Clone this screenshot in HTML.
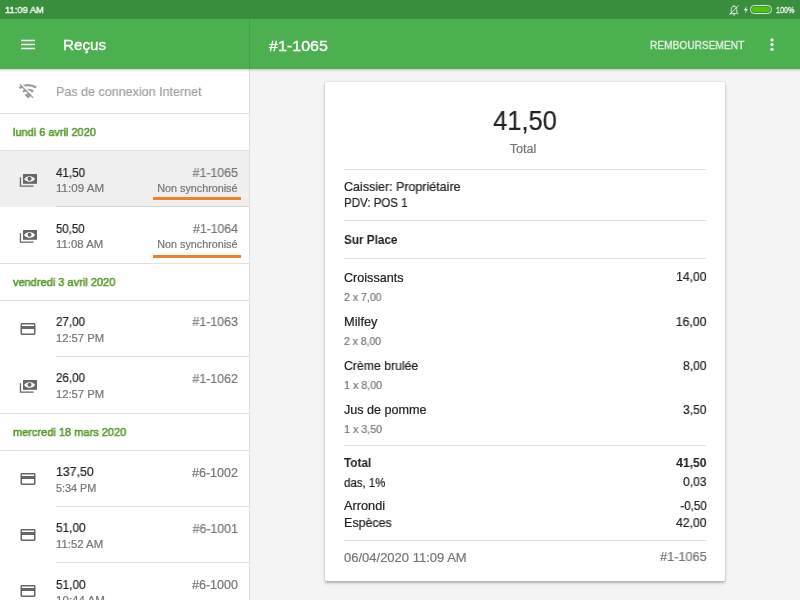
<!DOCTYPE html>
<html><head><meta charset="utf-8">
<style>
*{margin:0;padding:0;box-sizing:border-box}
html,body{width:800px;height:600px;overflow:hidden;background:#f4f4f4;font-family:"Liberation Sans",sans-serif;position:relative}
.t{position:absolute;white-space:nowrap;line-height:20px;will-change:transform}
.ln{position:absolute;height:1px}
.ic{position:absolute}
</style></head><body>
<div style="position:absolute;left:0;top:0;width:800px;height:19px;background:#3a8f3e"></div>
<div style="position:absolute;left:0;top:19px;width:800px;height:50px;background:#4caf50"></div>
<div style="position:absolute;left:249px;top:19px;width:1px;height:50px;background:#43a047"></div>
<div style="position:absolute;left:0;top:69px;width:249px;height:531px;background:#fff"></div>
<div style="position:absolute;left:249px;top:69px;width:1px;height:531px;background:#dedede"></div>
<div style="position:absolute;left:0;top:151px;width:249px;height:56px;background:#efefef"></div>
<div style="position:absolute;left:153px;top:197px;width:88px;height:3px;background:#f07f2c"></div>
<div style="position:absolute;left:153px;top:255px;width:88px;height:3px;background:#f07f2c"></div>
<div style="position:absolute;left:325px;top:82px;width:400px;height:498.5px;background:#fff;border-radius:1.5px;box-shadow:0 1.5px 3px rgba(0,0,0,.28),0 0 1.5px rgba(0,0,0,.14)"></div>
<div class="ln" style="left:0px;top:113px;width:249px;background:rgba(0,0,0,0.12)"></div><div class="ln" style="left:0px;top:150px;width:249px;background:rgba(0,0,0,0.12)"></div><div class="ln" style="left:0px;top:263px;width:249px;background:rgba(0,0,0,0.12)"></div><div class="ln" style="left:0px;top:300px;width:249px;background:rgba(0,0,0,0.12)"></div><div class="ln" style="left:0px;top:413px;width:249px;background:rgba(0,0,0,0.12)"></div><div class="ln" style="left:0px;top:450px;width:249px;background:rgba(0,0,0,0.12)"></div><div class="ln" style="left:56px;top:206px;width:193px;background:rgba(0,0,0,0.12)"></div><div class="ln" style="left:56px;top:356px;width:193px;background:rgba(0,0,0,0.12)"></div><div class="ln" style="left:56px;top:506px;width:193px;background:rgba(0,0,0,0.12)"></div><div class="ln" style="left:56px;top:562px;width:193px;background:rgba(0,0,0,0.12)"></div><div class="ln" style="left:344px;top:169px;width:362px;background:rgba(0,0,0,0.12)"></div><div class="ln" style="left:344px;top:220px;width:362px;background:rgba(0,0,0,0.12)"></div><div class="ln" style="left:344px;top:258px;width:362px;background:rgba(0,0,0,0.12)"></div><div class="ln" style="left:344px;top:445px;width:362px;background:rgba(0,0,0,0.12)"></div><div class="ln" style="left:344px;top:540px;width:362px;background:rgba(0,0,0,0.12)"></div>
<svg class="ic" style="left:21px;top:39px" width="14" height="11" viewBox="0 0 14 11"><path stroke="#fff" stroke-width="1.5" d="M0.1 1.6h13.9M0.1 5.55h13.9M0.1 9.5h13.9"/></svg>
<svg class="ic" style="left:769px;top:38px" width="6" height="14" viewBox="0 0 6 14"><circle cx="3" cy="1.9" r="1.6" fill="#fff"/><circle cx="3" cy="6.6" r="1.6" fill="#fff"/><circle cx="3" cy="11.3" r="1.6" fill="#fff"/></svg>
<svg class="ic" style="left:15px;top:78px" width="26" height="26" viewBox="0 0 26 26"><defs><mask id="wm"><rect width="26" height="26" fill="#fff"/><path d="M5.9 5.3L19.3 18.7" stroke="#000" stroke-width="1.5"/></mask></defs><g mask="url(#wm)" fill="none" stroke="#9a9a9a" stroke-width="2.2"><path d="M4.42 10.12A14.5 14.5 0 0 1 21.05 9.54"/><path d="M7.87 13.56A9.7 9.7 0 0 1 18.29 13.47"/><path d="M13.15 20.6L9.67 16.74A5.2 5.2 0 0 1 16.63 16.74Z" fill="#9a9a9a" stroke="none"/><path d="M4.9 6.5L18.1 19.7" stroke-width="1.4"/></g></svg>
<svg class="ic" style="left:728px;top:4px" width="12" height="12" viewBox="0 0 12 12"><path d="M3.2 9.6V5.4C3.2 3.6 4.4 2.2 6 2.2S8.8 3.6 8.8 5.4V9.6H10.2M1.8 9.6H8.2M4.9 10.6Q6 11.9 7.1 10.6M6 1V2.2M1.6 10.8L10.4 1.4" fill="none" stroke="#e8f0e8" stroke-width="0.9"/></svg>
<svg class="ic" style="left:743px;top:6px" width="6" height="8" viewBox="0 0 6 8"><path d="M3.9 0L0.8 4.3H2.8L1.8 7.4L5 3.1H3Z" fill="#e8f0e8"/></svg>
<div style="position:absolute;left:750px;top:5.3px;width:22.4px;height:8.6px;border:1.1px solid #d8e8d8;border-radius:4.3px;background:#3a8f3e"></div>
<div style="position:absolute;left:752.2px;top:7px;width:18px;height:5.2px;border-radius:2.6px;background:#4ec40a"></div>
<svg class="ic" style="left:19px;top:173px" width="18" height="18" viewBox="0 0 18 18">
<path fill="#666" d="M0.8 4.3h1.3v8.1h12.5v1.3H0.8z"/>
<rect x="4" y="1" width="14" height="9.8" fill="#666"/>
<path fill="#efefef" d="M5 5.9C7 3.6 9 3.2 10.5 3.2S14.5 3.6 16.1 5.9C14.5 8.2 12 8.8 10.5 8.8S7 8.2 5 5.9z"/>
<circle cx="10.5" cy="5.8" r="2" fill="#666"/>
</svg><svg class="ic" style="left:19px;top:229px" width="18" height="18" viewBox="0 0 18 18">
<path fill="#666" d="M0.8 4.3h1.3v8.1h12.5v1.3H0.8z"/>
<rect x="4" y="1" width="14" height="9.8" fill="#666"/>
<path fill="#fff" d="M5 5.9C7 3.6 9 3.2 10.5 3.2S14.5 3.6 16.1 5.9C14.5 8.2 12 8.8 10.5 8.8S7 8.2 5 5.9z"/>
<circle cx="10.5" cy="5.8" r="2" fill="#666"/>
</svg><svg class="ic" style="left:19px;top:320px" width="18" height="18" viewBox="0 0 24 24"><path fill="#666" d="M20 4H4c-1.11 0-1.99.89-1.99 2L2 18c0 1.11.89 2 2 2h16c1.11 0 2-.89 2-2V6c0-1.11-.89-2-2-2zm0 14H4v-6h16v6zm0-10H4V6h16v2z"/></svg><svg class="ic" style="left:19px;top:379px" width="18" height="18" viewBox="0 0 18 18">
<path fill="#666" d="M0.8 4.3h1.3v8.1h12.5v1.3H0.8z"/>
<rect x="4" y="1" width="14" height="9.8" fill="#666"/>
<path fill="#fff" d="M5 5.9C7 3.6 9 3.2 10.5 3.2S14.5 3.6 16.1 5.9C14.5 8.2 12 8.8 10.5 8.8S7 8.2 5 5.9z"/>
<circle cx="10.5" cy="5.8" r="2" fill="#666"/>
</svg><svg class="ic" style="left:19px;top:470px" width="18" height="18" viewBox="0 0 24 24"><path fill="#666" d="M20 4H4c-1.11 0-1.99.89-1.99 2L2 18c0 1.11.89 2 2 2h16c1.11 0 2-.89 2-2V6c0-1.11-.89-2-2-2zm0 14H4v-6h16v6zm0-10H4V6h16v2z"/></svg><svg class="ic" style="left:19px;top:526px" width="18" height="18" viewBox="0 0 24 24"><path fill="#666" d="M20 4H4c-1.11 0-1.99.89-1.99 2L2 18c0 1.11.89 2 2 2h16c1.11 0 2-.89 2-2V6c0-1.11-.89-2-2-2zm0 14H4v-6h16v6zm0-10H4V6h16v2z"/></svg><svg class="ic" style="left:19px;top:582px" width="18" height="18" viewBox="0 0 24 24"><path fill="#666" d="M20 4H4c-1.11 0-1.99.89-1.99 2L2 18c0 1.11.89 2 2 2h16c1.11 0 2-.89 2-2V6c0-1.11-.89-2-2-2zm0 14H4v-6h16v6zm0-10H4V6h16v2z"/></svg>
<div style="position:absolute;left:0;top:69px;width:800px;height:3px;background:linear-gradient(rgba(60,40,60,.2),rgba(60,40,60,0))"></div>
<div class="t" style="top:-0.13px;font-size:9.6px;-webkit-text-stroke:0.35px #ffffff;color:#ffffff;left:5px;transform:scaleX(0.9783);transform-origin:left;">11:09 AM</div><div class="t" style="top:-0.21px;font-size:8.4px;-webkit-text-stroke:0.35px #f4f4f4;color:#f4f4f4;left:775.5px;transform:scaleX(0.8595);transform-origin:left;">100%</div><div class="t" style="top:35.40px;font-size:15px;-webkit-text-stroke:0.35px #ffffff;color:#ffffff;left:63px;transform:scaleX(1.0152);transform-origin:left;">Reçus</div><div class="t" style="top:35.96px;font-size:15.4px;-webkit-text-stroke:0.35px #ffffff;color:#ffffff;left:269px;transform:scaleX(1.0443);transform-origin:left;">#1-1065</div><div class="t" style="top:35.12px;font-size:11.5px;-webkit-text-stroke:0.35px #e6f3e6;color:#e6f3e6;left:649.5px;transform:scaleX(0.8840);transform-origin:left;">REMBOURSEMENT</div><div class="t" style="top:81.82px;font-size:13.5px;-webkit-text-stroke:0.2px #9e9e9e;color:#9e9e9e;left:56px;transform:scaleX(0.9285);transform-origin:left;">Pas de connexion Internet</div><div class="t" style="top:122.45px;font-size:11.4px;-webkit-text-stroke:0.55px #58992c;color:#58992c;left:12.6px;transform:scaleX(0.9623);transform-origin:left;">lundi 6 avril 2020</div><div class="t" style="top:272.45px;font-size:11.4px;-webkit-text-stroke:0.55px #58992c;color:#58992c;left:12.6px;transform:scaleX(0.9670);transform-origin:left;">vendredi 3 avril 2020</div><div class="t" style="top:422.45px;font-size:11.4px;-webkit-text-stroke:0.55px #58992c;color:#58992c;left:12.6px;transform:scaleX(0.9670);transform-origin:left;">mercredi 18 mars 2020</div><div class="t" style="top:162.70px;font-size:12.7px;-webkit-text-stroke:0.2px #212121;color:#212121;left:56.4px;transform:scaleX(0.9127);transform-origin:left;">41,50</div><div class="t" style="top:177.83px;font-size:10.6px;-webkit-text-stroke:0.2px #757575;color:#757575;left:56.4px;transform:scaleX(1.0936);transform-origin:left;">11:09 AM</div><div class="t" style="top:163.07px;font-size:12.5px;-webkit-text-stroke:0.2px #757575;color:#757575;right:562px;transform:scaleX(0.9874);transform-origin:right;">#1-1065</div><div class="t" style="top:179.03px;font-size:10px;-webkit-text-stroke:0.2px #757575;color:#757575;right:562.4px;transform:scaleX(1.0774);transform-origin:right;">Non synchronisé</div><div class="t" style="top:218.60px;font-size:12.7px;-webkit-text-stroke:0.2px #212121;color:#212121;left:56.4px;transform:scaleX(0.8971);transform-origin:left;">50,50</div><div class="t" style="top:234.33px;font-size:10.6px;-webkit-text-stroke:0.2px #757575;color:#757575;left:56.4px;transform:scaleX(1.0755);transform-origin:left;">11:08 AM</div><div class="t" style="top:218.97px;font-size:12.5px;-webkit-text-stroke:0.2px #757575;color:#757575;right:562px;transform:scaleX(0.9770);transform-origin:right;">#1-1064</div><div class="t" style="top:234.94px;font-size:10px;-webkit-text-stroke:0.2px #757575;color:#757575;right:562.4px;transform:scaleX(1.0772);transform-origin:right;">Non synchronisé</div><div class="t" style="top:312.10px;font-size:12.7px;-webkit-text-stroke:0.2px #212121;color:#212121;left:56.4px;transform:scaleX(0.9120);transform-origin:left;">27,00</div><div class="t" style="top:327.83px;font-size:10.6px;-webkit-text-stroke:0.2px #757575;color:#757575;left:56.4px;transform:scaleX(1.0591);transform-origin:left;">12:57 PM</div><div class="t" style="top:312.47px;font-size:12.5px;-webkit-text-stroke:0.2px #757575;color:#757575;right:562px;transform:scaleX(0.9919);transform-origin:right;">#1-1063</div><div class="t" style="top:368.30px;font-size:12.7px;-webkit-text-stroke:0.2px #212121;color:#212121;left:56.4px;transform:scaleX(0.9120);transform-origin:left;">26,00</div><div class="t" style="top:384.03px;font-size:10.6px;-webkit-text-stroke:0.2px #757575;color:#757575;left:56.4px;transform:scaleX(1.0591);transform-origin:left;">12:57 PM</div><div class="t" style="top:368.67px;font-size:12.5px;-webkit-text-stroke:0.2px #757575;color:#757575;right:562px;transform:scaleX(0.9919);transform-origin:right;">#1-1062</div><div class="t" style="top:462.40px;font-size:12.7px;-webkit-text-stroke:0.2px #212121;color:#212121;left:56.4px;transform:scaleX(0.9717);transform-origin:left;">137,50</div><div class="t" style="top:478.13px;font-size:10.6px;-webkit-text-stroke:0.2px #757575;color:#757575;left:56.4px;transform:scaleX(1.0229);transform-origin:left;">5:34 PM</div><div class="t" style="top:462.77px;font-size:12.5px;-webkit-text-stroke:0.2px #757575;color:#757575;right:562px;transform:scaleX(1.0008);transform-origin:right;">#6-1002</div><div class="t" style="top:518.40px;font-size:12.7px;-webkit-text-stroke:0.2px #212121;color:#212121;left:56.4px;transform:scaleX(0.9306);transform-origin:left;">51,00</div><div class="t" style="top:534.13px;font-size:10.6px;-webkit-text-stroke:0.2px #757575;color:#757575;left:56.4px;transform:scaleX(1.0719);transform-origin:left;">11:52 AM</div><div class="t" style="top:518.77px;font-size:12.5px;-webkit-text-stroke:0.2px #757575;color:#757575;right:562px;transform:scaleX(0.9876);transform-origin:right;">#6-1001</div><div class="t" style="top:574.60px;font-size:12.7px;-webkit-text-stroke:0.2px #212121;color:#212121;left:56.4px;transform:scaleX(0.9306);transform-origin:left;">51,00</div><div class="t" style="top:590.33px;font-size:10.6px;-webkit-text-stroke:0.2px #757575;color:#757575;left:56.4px;transform:scaleX(1.0936);transform-origin:left;">10:44 AM</div><div class="t" style="top:574.97px;font-size:12.5px;-webkit-text-stroke:0.2px #757575;color:#757575;right:562px;transform:scaleX(1.0004);transform-origin:right;">#6-1000</div><div class="t" style="top:111.24px;font-size:27px;-webkit-text-stroke:0.2px #212121;color:#212121;left:224.70000000000005px;width:600px;text-align:center;transform:scaleX(0.9422);transform-origin:center;">41,50</div><div class="t" style="top:138.64px;font-size:12px;-webkit-text-stroke:0.2px #757575;color:#757575;left:223px;width:600px;text-align:center;transform:scaleX(1.0515);transform-origin:center;">Total</div><div class="t" style="top:176.63px;font-size:12.6px;-webkit-text-stroke:0.2px #212121;color:#212121;left:344px;transform:scaleX(0.9915);transform-origin:left;">Caissier: Propriétaire</div><div class="t" style="top:192.88px;font-size:12.6px;-webkit-text-stroke:0.2px #212121;color:#212121;left:344px;transform:scaleX(0.9154);transform-origin:left;">PDV: POS 1</div><div class="t" style="top:230.23px;font-size:12.6px;font-weight:700;color:#212121;left:344px;transform:scaleX(0.9289);transform-origin:left;">Sur Place</div><div class="t" style="top:267.63px;font-size:12.6px;-webkit-text-stroke:0.2px #212121;color:#212121;left:344px;">Croissants</div><div class="t" style="top:267.43px;font-size:12.6px;-webkit-text-stroke:0.2px #212121;color:#212121;right:93.29999999999995px;transform:scaleX(0.9664);transform-origin:right;">14,00</div><div class="t" style="top:286.59px;font-size:11px;-webkit-text-stroke:0.2px #757575;color:#757575;left:344px;transform:scaleX(0.9599);transform-origin:left;">2 x 7,00</div><div class="t" style="top:311.83px;font-size:12.6px;-webkit-text-stroke:0.2px #212121;color:#212121;left:344px;transform:scaleX(1.0195);transform-origin:left;">Milfey</div><div class="t" style="top:311.63px;font-size:12.6px;-webkit-text-stroke:0.2px #212121;color:#212121;right:93.29999999999995px;transform:scaleX(0.9776);transform-origin:right;">16,00</div><div class="t" style="top:330.79px;font-size:11px;-webkit-text-stroke:0.2px #757575;color:#757575;left:344px;transform:scaleX(0.9435);transform-origin:left;">2 x 8,00</div><div class="t" style="top:356.03px;font-size:12.6px;-webkit-text-stroke:0.2px #212121;color:#212121;left:344px;transform:scaleX(0.9737);transform-origin:left;">Crème brulée</div><div class="t" style="top:355.83px;font-size:12.6px;-webkit-text-stroke:0.2px #212121;color:#212121;right:93.29999999999995px;transform:scaleX(0.9583);transform-origin:right;">8,00</div><div class="t" style="top:374.99px;font-size:11px;-webkit-text-stroke:0.2px #757575;color:#757575;left:344px;transform:scaleX(0.9737);transform-origin:left;">1 x 8,00</div><div class="t" style="top:400.23px;font-size:12.6px;-webkit-text-stroke:0.2px #212121;color:#212121;left:344px;transform:scaleX(0.9993);transform-origin:left;">Jus de pomme</div><div class="t" style="top:400.03px;font-size:12.6px;-webkit-text-stroke:0.2px #212121;color:#212121;right:93.29999999999995px;transform:scaleX(0.9583);transform-origin:right;">3,50</div><div class="t" style="top:419.19px;font-size:11px;-webkit-text-stroke:0.2px #757575;color:#757575;left:344px;transform:scaleX(0.9737);transform-origin:left;">1 x 3,50</div><div class="t" style="top:452.63px;font-size:12.6px;font-weight:700;color:#212121;left:344px;transform:scaleX(0.9310);transform-origin:left;">Total</div><div class="t" style="top:452.63px;font-size:12.6px;font-weight:700;color:#212121;right:93.29999999999995px;transform:scaleX(0.9645);transform-origin:right;">41,50</div><div class="t" style="top:472.63px;font-size:12.6px;-webkit-text-stroke:0.2px #212121;color:#212121;left:344px;transform:scaleX(0.9111);transform-origin:left;">das, 1%</div><div class="t" style="top:472.23px;font-size:12.6px;-webkit-text-stroke:0.2px #212121;color:#212121;right:93.29999999999995px;transform:scaleX(0.9583);transform-origin:right;">0,03</div><div class="t" style="top:495.63px;font-size:12.6px;-webkit-text-stroke:0.2px #212121;color:#212121;left:344px;transform:scaleX(1.0109);transform-origin:left;">Arrondi</div><div class="t" style="top:495.63px;font-size:12.6px;-webkit-text-stroke:0.2px #212121;color:#212121;right:93.29999999999995px;transform:scaleX(0.9184);transform-origin:right;">-0,50</div><div class="t" style="top:512.63px;font-size:12.6px;-webkit-text-stroke:0.2px #212121;color:#212121;left:344px;transform:scaleX(0.9879);transform-origin:left;">Espèces</div><div class="t" style="top:512.63px;font-size:12.6px;-webkit-text-stroke:0.2px #212121;color:#212121;right:93.29999999999995px;transform:scaleX(0.9677);transform-origin:right;">42,00</div><div class="t" style="top:547.50px;font-size:13px;-webkit-text-stroke:0.2px #757575;color:#757575;left:344px;">06/04/2020 11:09 AM</div><div class="t" style="top:547.10px;font-size:13px;-webkit-text-stroke:0.2px #757575;color:#757575;right:93.29999999999995px;transform:scaleX(0.9787);transform-origin:right;">#1-1065</div>
</body></html>
